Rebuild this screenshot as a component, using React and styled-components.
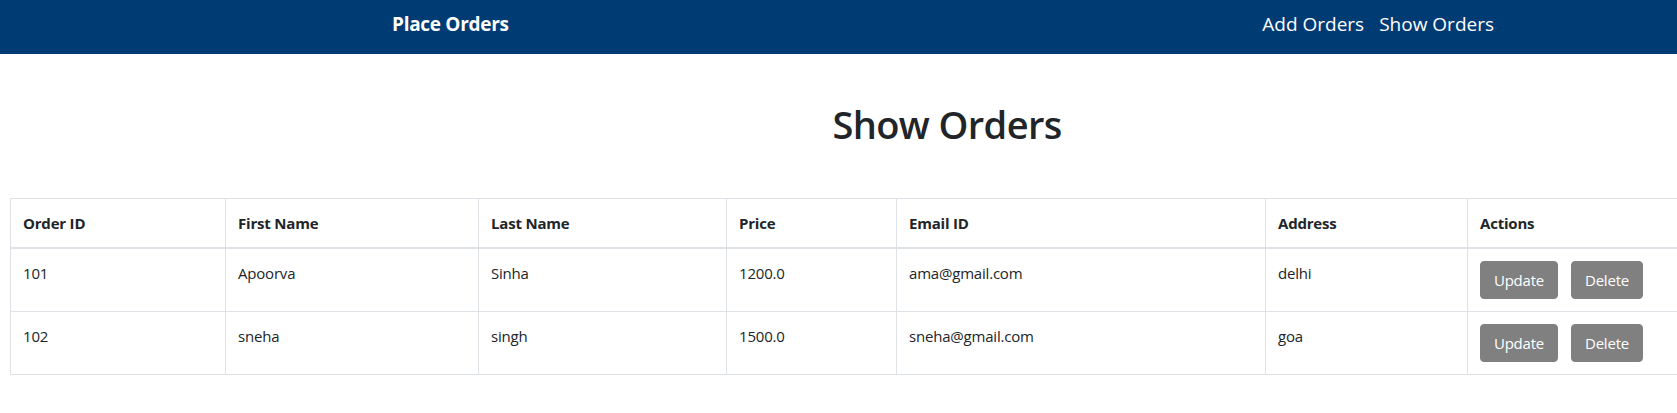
import React from 'react';
import styled, { createGlobalStyle } from "styled-components";

const GlobalStyle = createGlobalStyle`
    html, body {
        margin: 0;
        padding: 0;
        overflow: hidden;
        background: #fff;
    }
    body {
        font-family: "Open Sans", "Noto Sans", sans-serif;
        color: #212529;
        font-size: 16px;
        line-height: 1.5;
    }
`;

const Page = styled.div`
    width: 1894px;
`;

const Navbar = styled.nav`
    height: 54px;
    box-sizing: border-box;
    background: #013b74;
    padding-top: 9px;
`;

const NavContainer = styled.div`
    width: 1140px;
    margin: 0 auto;
    padding: 0 15px;
    box-sizing: border-box;
    display: flex;
    justify-content: space-between;
    align-items: flex-start;
`;

const Brand = styled.a`
    color: #fff;
    font-size: 19px;
    font-weight: 700;
    line-height: 30px;
    letter-spacing: -0.3px;
    text-decoration: none;
    cursor: pointer;
`;

const NavLinks = styled.div`
    display: flex;
    gap: 15px;
    padding-right: 8px;
`;

const NavLink = styled.a`
    color: #fff;
    font-size: 19px;
    line-height: 30px;
    letter-spacing: 0;
    text-decoration: none;
    cursor: pointer;
`;

const Main = styled.div`
    padding: 0 10px;
`;

const Title = styled.h1`
    margin: 46px 0 50px;
    font-size: 38px;
    font-weight: 600;
    line-height: 48px;
    letter-spacing: -0.6px;
    text-align: center;
`;

const Table = styled.table`
    width: 100%;
    table-layout: fixed;
    border-collapse: collapse;
    border: 1px solid #dee2e6;
`;

const Th = styled.th`
    text-align: left;
    font-size: 15px;
    font-weight: 700;
    line-height: 24px;
    letter-spacing: -0.2px;
    padding: 12px;
    border: 1px solid #dee2e6;
    border-bottom: 2px solid #dee2e6;
    vertical-align: top;
`;

const Td = styled.td`
    font-size: 15px;
    line-height: 24px;
    letter-spacing: -0.2px;
    padding: 12px;
    border: 1px solid #dee2e6;
    vertical-align: top;
`;

const Actions = styled.div`
    display: flex;
    gap: 13px;
`;

const Button = styled.button`
    font-family: inherit;
    font-size: 15px;
    letter-spacing: -0.2px;
    line-height: 24px;
    width: ${(p) => p.$w}px;
    padding: 6px 0;
    border: 1px solid #808080;
    border-radius: 4px;
    background: #808080;
    color: #fff;
    cursor: pointer;
`;

const widths = [215, 253, 248, 170, 369, 202, 417];
const heads = ["Order ID", "First Name", "Last Name", "Price", "Email ID", "Address", "Actions"];

const orders = [
    { id: 101, first: "Apoorva", last: "Sinha", price: "1200.0", email: "ama@gmail.com", address: "delhi" },
    { id: 102, first: "sneha", last: "singh", price: "1500.0", email: "sneha@gmail.com", address: "goa" },
];

const App = () => {
    return (
        <Page>
            <GlobalStyle />
            <Navbar>
                <NavContainer>
                    <Brand>Place Orders</Brand>
                    <NavLinks>
                        <NavLink>Add Orders</NavLink>
                        <NavLink>Show Orders</NavLink>
                    </NavLinks>
                </NavContainer>
            </Navbar>
            <Main>
                <Title>Show Orders</Title>
                <Table>
                    <colgroup>
                        {widths.map((w, i) => <col key={i} style={{ width: w }} />)}
                    </colgroup>
                    <thead>
                        <tr>
                            {heads.map((h) => <Th key={h}>{h}</Th>)}
                        </tr>
                    </thead>
                    <tbody>
                        {orders.map((o) => (
                            <tr key={o.id}>
                                <Td>{o.id}</Td>
                                <Td>{o.first}</Td>
                                <Td>{o.last}</Td>
                                <Td>{o.price}</Td>
                                <Td>{o.email}</Td>
                                <Td>{o.address}</Td>
                                <Td>
                                    <Actions>
                                        <Button $w={78}>Update</Button>
                                        <Button $w={72}>Delete</Button>
                                    </Actions>
                                </Td>
                            </tr>
                        ))}
                    </tbody>
                </Table>
            </Main>
        </Page>
    )
}

export default App
